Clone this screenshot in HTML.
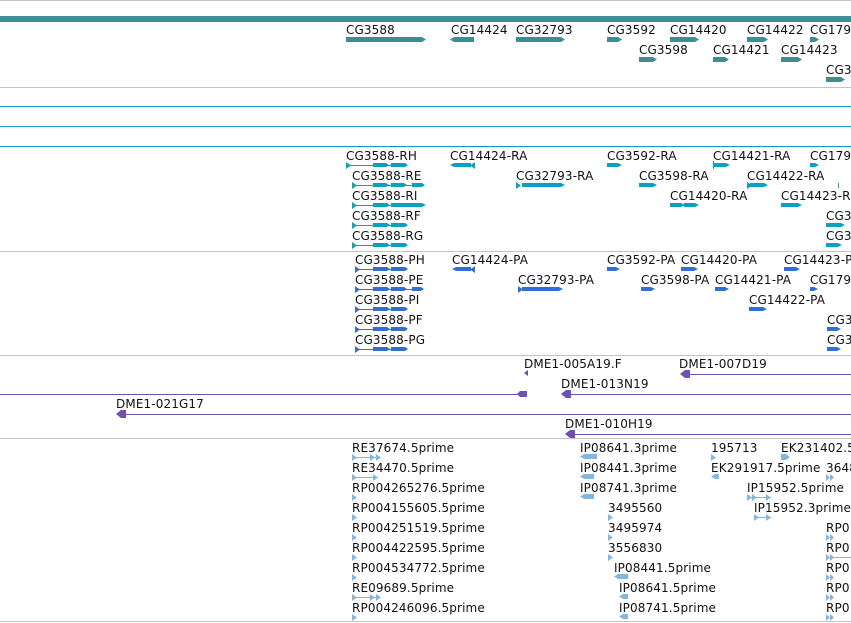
<!DOCTYPE html>
<html><head><meta charset="utf-8"><style>
html,body{margin:0;padding:0;background:#fff;width:851px;height:623px;overflow:hidden}
svg{display:block}
text{font-family:"DejaVu Sans","Liberation Sans",sans-serif;font-size:12px;letter-spacing:0.12px;fill:#111}
</style></head><body>
<svg width="851" height="623" viewBox="0 0 851 623" xmlns="http://www.w3.org/2000/svg">
<g fill="#c4c4c4">
<rect x="0" y="0" width="851" height="1"/>
<rect x="0" y="87" width="851" height="1"/>
<rect x="0" y="251" width="851" height="1"/>
<rect x="0" y="355" width="851" height="1"/>
<rect x="0" y="438" width="851" height="1"/>
<rect x="0" y="621" width="851" height="1"/>
</g>
<g fill="#0b9fbe">
<rect x="0" y="106" width="851" height="1"/>
<rect x="0" y="126" width="851" height="1"/>
<rect x="0" y="146" width="851" height="1"/>
</g>
<rect x="0" y="16" width="851" height="6" fill="#3f8d91"/>

<g fill="#3f8d91">
<path d="M346 37h76l4 2.5-4 2.5h-76z"/>
<path d="M474 37h-20l-4 2.5 4 2.5h20z"/>
<path d="M516 37h45l4 2.5-4 2.5h-45z"/>
<path d="M607 37h11l4 2.5-4 2.5h-11z"/>
<path d="M670 37h25l4 2.5-4 2.5h-25z"/>
<path d="M747 37h17l4 2.5-4 2.5h-17z"/>
<path d="M810 37h5l4 2.5-4 2.5h-5z"/>
<path d="M639 57h14l4 2.5-4 2.5h-14z"/>
<path d="M713 57h12l4 2.5-4 2.5h-12z"/>
<path d="M781 57h17l4 2.5-4 2.5h-17z"/>
<path d="M826 77h15l4 2.5-4 2.5h-15z"/>
</g>
<text x="346" y="34">CG3588</text><text x="451" y="34">CG14424</text><text x="516" y="34">CG32793</text>
<text x="607" y="34">CG3592</text><text x="670" y="34">CG14420</text><text x="747" y="34">CG14422</text><text x="810" y="34">CG179</text>
<text x="639" y="54">CG3598</text><text x="713" y="54">CG14421</text><text x="781" y="54">CG14423</text>
<text x="826" y="74">CG3</text>

<g fill="#0aa0c0">
<rect x="346" y="165" width="60" height="1"/>
<path d="M346 162l5 3.5-5 3.5z M373 163h13l3 2-3 2h-13z M391 163h14l3 2-3 2h-14z"/>
<path d="M475 162l-5 3.5 5 3.5z M471 163h-17l-4 2 4 2h17z"/>
<path d="M607 163h11l4 2-4 2h-11z"/>
<path d="M713 163h13l4 2-4 2h-13z M713 161h1v8h-1z"/>
<path d="M810 163h5l4 2-4 2h-5z"/>
<rect x="352" y="185" width="72" height="1"/>
<path d="M352 182l5 3.5-5 3.5z M373 183h13l3 2-3 2h-13z M391 183h13l3 2-3 2h-13z M412 183h10l3 2-3 2h-10z"/>
<path d="M516 182l5 3.5-5 3.5z M522 183h39l4 2-4 2h-39z"/>
<path d="M639 183h14l4 2-4 2h-14z"/>
<path d="M747 182l5 3.5-5 3.5z M750 183h14l4 2-4 2h-14z"/>
<rect x="838" y="183" width="1" height="5"/>
<rect x="352" y="205" width="70" height="1"/>
<path d="M352 202l5 3.5-5 3.5z M373 203h14l3 2-3 2h-14z M391 203h31l4 2-4 2h-31z"/>
<path d="M670 203h11l4 2-4 2h-11z M684 203h11l4 2-4 2h-11z"/>
<path d="M781 203h17l4 2-4 2h-17z"/>
<rect x="352" y="225" width="55" height="1"/>
<path d="M352 222l5 3.5-5 3.5z M373 223h14l3 2-3 2h-14z M391 223h14l3 2-3 2h-14z"/>
<path d="M826 223h15l4 2-4 2h-15z"/>
<rect x="352" y="245" width="55" height="1"/>
<path d="M352 242l5 3.5-5 3.5z M373 243h14l3 2-3 2h-14z M391 243h14l3 2-3 2h-14z"/>
<path d="M826 243h12l4 2-4 2h-12z"/>
</g>
<text x="346" y="160">CG3588-RH</text><text x="450" y="160">CG14424-RA</text><text x="607" y="160">CG3592-RA</text><text x="713" y="160">CG14421-RA</text><text x="810" y="160">CG179</text>
<text x="352" y="180">CG3588-RE</text><text x="516" y="180">CG32793-RA</text><text x="639" y="180">CG3598-RA</text><text x="747" y="180">CG14422-RA</text>
<text x="352" y="200">CG3588-RI</text><text x="670" y="200">CG14420-RA</text><text x="781" y="200">CG14423-R</text>
<text x="352" y="220">CG3588-RF</text><text x="826" y="220">CG3</text>
<text x="352" y="240">CG3588-RG</text><text x="826" y="240">CG3</text>

<g fill="#3070d0">
<rect x="355" y="269" width="52" height="1"/>
<path d="M355 266l5 3.5-5 3.5z M373 267h14l3 2-3 2h-14z M391 267h14l3 2-3 2h-14z"/>
<path d="M475 266l-5 3.5 5 3.5z M471 267h-15l-4 2 4 2h15z"/>
<path d="M607 267h9l4 2-4 2h-9z"/>
<path d="M681 267h13l4 2-4 2h-13z"/>
<path d="M784 267h12l4 2-4 2h-12z"/>
<rect x="355" y="289" width="68" height="1"/>
<path d="M355 286l5 3.5-5 3.5z M373 287h14l3 2-3 2h-14z M391 287h13l3 2-3 2h-13z M412 287h9l3 2-3 2h-9z"/>
<path d="M518 286l5 3.5-5 3.5z M522 287h37l4 2-4 2h-37z"/>
<path d="M641 287h10l4 2-4 2h-10z"/>
<path d="M715 287h10l4 2-4 2h-10z"/>
<path d="M810 287h4l4 2-4 2h-4z"/>
<rect x="355" y="309" width="52" height="1"/>
<path d="M355 306l5 3.5-5 3.5z M373 307h14l3 2-3 2h-14z M391 307h14l3 2-3 2h-14z"/>
<path d="M749 307h14l4 2-4 2h-14z"/>
<rect x="355" y="329" width="52" height="1"/>
<path d="M355 326l5 3.5-5 3.5z M373 327h14l3 2-3 2h-14z M391 327h14l3 2-3 2h-14z"/>
<path d="M827 327h10l4 2-4 2h-10z"/>
<rect x="355" y="349" width="52" height="1"/>
<path d="M355 346l5 3.5-5 3.5z M373 347h14l3 2-3 2h-14z M391 347h14l3 2-3 2h-14z"/>
<path d="M827 347h10l4 2-4 2h-10z"/>
</g>
<text x="355" y="264">CG3588-PH</text><text x="452" y="264">CG14424-PA</text><text x="607" y="264">CG3592-PA</text><text x="681" y="264">CG14420-PA</text><text x="784" y="264">CG14423-P</text>
<text x="355" y="284">CG3588-PE</text><text x="518" y="284">CG32793-PA</text><text x="641" y="284">CG3598-PA</text><text x="715" y="284">CG14421-PA</text><text x="810" y="284">CG179</text>
<text x="355" y="304">CG3588-PI</text><text x="749" y="304">CG14422-PA</text>
<text x="355" y="324">CG3588-PF</text><text x="827" y="324">CG3</text>
<text x="355" y="344">CG3588-PG</text><text x="827" y="344">CG3</text>

<g fill="#7050b0">
<path d="M528 370l-4 3 4 3z"/>
<rect x="684" y="374" width="167" height="1"/>
<path d="M690 370h-5l-5 4 5 4h5z"/>
<rect x="0" y="394" width="520" height="1"/>
<path d="M520 391h7v6h-7l-3-3z"/>
<rect x="565" y="394" width="286" height="1"/>
<path d="M571 390h-5l-5 4 5 4h5z"/>
<rect x="120" y="414" width="731" height="1"/>
<path d="M126 410h-5l-5 4 5 4h5z"/>
<rect x="569" y="434" width="282" height="1"/>
<path d="M575 430h-5l-5 4 5 4h5z"/>
</g>
<text x="524" y="368">DME1-005A19.F</text><text x="679" y="368">DME1-007D19</text>
<text x="561" y="388">DME1-013N19</text>
<text x="116" y="408">DME1-021G17</text>
<text x="565" y="428">DME1-010H19</text>

<g fill="#82b8e0">
<rect x="352" y="457" width="28" height="1"/><path d="M352 454l5 3.5-5 3.5z M370 454l5 3.5-5 3.5z M376 454l5 3.5-5 3.5z"/>
<rect x="352" y="477" width="25" height="1"/><path d="M352 474l5 3.5-5 3.5z M373 474l5 3.5-5 3.5z"/>
<path d="M352 494l5 3.5-5 3.5z M352 514l5 3.5-5 3.5z M352 534l5 3.5-5 3.5z M352 554l5 3.5-5 3.5z M352 574l5 3.5-5 3.5z M352 614l5 3.5-5 3.5z"/>
<rect x="352" y="597" width="28" height="1"/><path d="M352 594l5 3.5-5 3.5z M370 594l5 3.5-5 3.5z M376 594l5 3.5-5 3.5z"/>
<path d="M597 454h-13l-4 2.5 4 2.5h13z M594 474h-10l-4 2.5 4 2.5h10z M594 494h-10l-4 2.5 4 2.5h10z"/>
<path d="M608 514l5 3.5-5 3.5z M608 534l5 3.5-5 3.5z M608 554l5 3.5-5 3.5z"/>
<path d="M628 574h-10l-4 2.5 4 2.5h10z M628 594h-5l-4 2.5 4 2.5h5z M628 614h-5l-4 2.5 4 2.5h5z"/>
<path d="M711 454l5 3.5-5 3.5z M719 474h-4l-4 2.5 4 2.5h4z"/>
<rect x="747" y="497" width="24" height="1"/><path d="M747 494l5 3.5-5 3.5z M752 494l5 3.5-5 3.5z M766 494l5 3.5-5 3.5z"/>
<rect x="754" y="517" width="17" height="1"/><path d="M754 514l5 3.5-5 3.5z M766 514l5 3.5-5 3.5z"/>
<path d="M781 454h5l4 3-4 3h-5z"/>
<path d="M826 474l4 3.5-4 3.5z M830 474l4 3.5-4 3.5z"/>
<path d="M826 534l4 3.5-4 3.5z M830 534l4 3.5-4 3.5z"/>
<rect x="826" y="557" width="25" height="1"/><path d="M826 554l4 3.5-4 3.5z M830 554l4 3.5-4 3.5z"/>
<path d="M826 574l4 3.5-4 3.5z M830 574l4 3.5-4 3.5z M826 594l4 3.5-4 3.5z M830 594l4 3.5-4 3.5z M826 614l4 3.5-4 3.5z M830 614l4 3.5-4 3.5z"/>
</g>
<text x="352" y="452">RE37674.5prime</text><text x="580" y="452">IP08641.3prime</text><text x="711" y="452">195713</text><text x="781" y="452">EK231402.5</text>
<text x="352" y="472">RE34470.5prime</text><text x="580" y="472">IP08441.3prime</text><text x="711" y="472">EK291917.5prime</text><text x="826" y="472">3648</text>
<text x="352" y="492">RP004265276.5prime</text><text x="580" y="492">IP08741.3prime</text><text x="747" y="492">IP15952.5prime</text>
<text x="352" y="512">RP004155605.5prime</text><text x="608" y="512">3495560</text><text x="754" y="512">IP15952.3prime</text>
<text x="352" y="532">RP004251519.5prime</text><text x="608" y="532">3495974</text><text x="826" y="532">RP0</text>
<text x="352" y="552">RP004422595.5prime</text><text x="608" y="552">3556830</text><text x="826" y="552">RP0</text>
<text x="352" y="572">RP004534772.5prime</text><text x="614" y="572">IP08441.5prime</text><text x="826" y="572">RP0</text>
<text x="352" y="592">RE09689.5prime</text><text x="619" y="592">IP08641.5prime</text><text x="826" y="592">RP0</text>
<text x="352" y="612">RP004246096.5prime</text><text x="619" y="612">IP08741.5prime</text><text x="826" y="612">RP0</text>
</svg>
</body></html>
